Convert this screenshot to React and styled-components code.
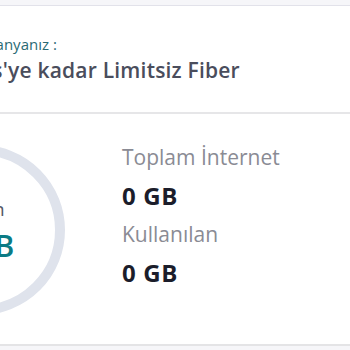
import React from 'react';
import styled, { createGlobalStyle } from 'styled-components';

const GlobalStyle = createGlobalStyle`
  html, body {
    margin: 0;
    padding: 0;
    background: #f6f6f9;
    font-family: "Open Sans", "Liberation Sans", sans-serif;
    overflow: hidden;
  }
`;

const stats = [
  { label: 'Toplam İnternet', value: '0 GB' },
  { label: 'Kullanılan', value: '0 GB' },
];

export default function App() {
  return (
    <Page>
      <GlobalStyle />
      <Card>
        <Header>
          <Caption>Kampanyanız :</Caption>
          <Title>100 Mbps'ye kadar Limitsiz Fiber</Title>
        </Header>
        <Usage>
          <Ring>
            <RingLabel>Kalan</RingLabel>
            <RingValue>0 GB</RingValue>
          </Ring>
          <Stats>
            {stats.map(s => (
              <Stat key={s.label}>
                <StatLabel>{s.label}</StatLabel>
                <StatValue>{s.value}</StatValue>
              </Stat>
            ))}
          </Stats>
        </Usage>
      </Card>
    </Page>
  );
}

const Page = styled.div`
  width: 350px;
  height: 350px;
  padding-top: 5px;
  box-sizing: border-box;
  background: #f6f6f9;
`;

const Card = styled.div`
  background: #fff;
  border-top: 1px solid #e2e2ea;
`;

const Header = styled.div`
  height: 108px;
  box-sizing: border-box;
  padding-top: 29px;
  border-bottom: 2px solid #e6e6e8;
  white-space: nowrap;
`;

const Caption = styled.div`
  margin-left: -45px;
  font-size: 15px;
  line-height: 18px;
  color: #2a6a74;
`;

const Title = styled.div`
  margin-top: 4px;
  margin-left: -96px;
  font-size: 21px;
  line-height: 26px;
  font-weight: 600;
  letter-spacing: 0.2px;
  color: #4a4d5c;
`;

const Usage = styled.div`
  display: flex;
  align-items: flex-start;
  height: 232px;
  box-sizing: border-box;
  padding-top: 31px;
  border-bottom: 2px solid #e4e4e6;
`;

const Ring = styled.div`
  flex: none;
  width: 170px;
  height: 170px;
  box-sizing: border-box;
  margin-left: -105px;
  border: 10px solid #dfe3ec;
  border-radius: 50%;
  display: flex;
  flex-direction: column;
  align-items: center;
  justify-content: center;
`;

const RingLabel = styled.div`
  font-size: 19px;
  line-height: 22px;
  color: #555866;
`;

const RingValue = styled.div`
  margin-top: 9px;
  font-size: 30px;
  line-height: 34px;
  font-weight: 600;
  letter-spacing: 1px;
  color: #0b7b85;
`;

const Stats = styled.div`
  margin-left: 57px;
  margin-top: -1px;
  display: flex;
  flex-direction: column;
  gap: 11px;
  white-space: nowrap;
`;

const Stat = styled.div`
  display: flex;
  flex-direction: column;
`;

const StatLabel = styled.div`
  font-size: 21px;
  line-height: 26px;
  color: #8a8b94;
`;

const StatValue = styled.div`
  margin-top: 12px;
  font-size: 24px;
  line-height: 28px;
  font-weight: 700;
  letter-spacing: 0.6px;
  color: #1b1d2b;
`;
